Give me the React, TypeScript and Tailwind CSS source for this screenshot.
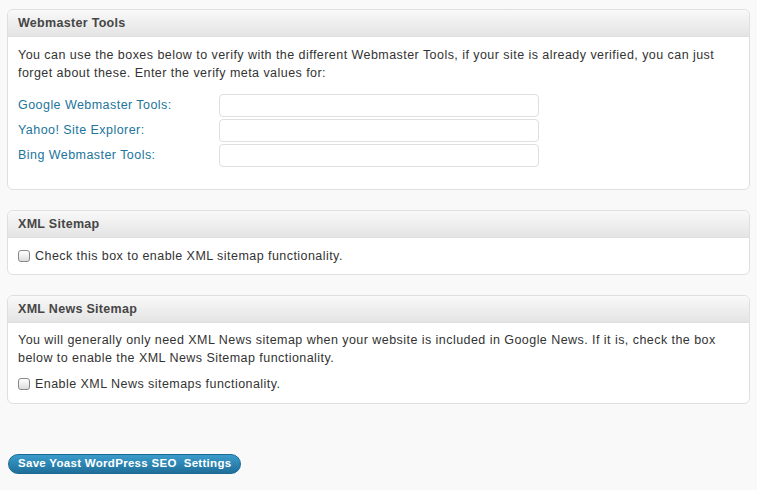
export default function App() {
  const f = { fontFamily: '"Liberation Sans", Arial, sans-serif' };
  const Head = ({ t }: { t: string }) => (
    <div className="h-[27px] flex items-center px-[10px] rounded-t-[6px] border-b border-[#dfdfdf] bg-gradient-to-b from-[#f9f9f9] to-[#e4e4e4] text-[12.5px] font-bold text-[#464646] tracking-[0.3px]">{t}</div>
  );
  const Cb = () => <span className="inline-block w-[12px] h-[12px] border border-[#888] rounded-[3px] bg-gradient-to-b from-white to-[#ddd] mr-[5px] align-[-1px]" />;
  return (
    <div style={f} className="w-[757px] h-[490px] bg-[#f9f9f9] pt-[9px] px-[7px] text-[12.5px] tracking-[0.45px] text-[#333] overflow-hidden">
      <div className="border border-[#dfdfdf] rounded-[6px] bg-white">
        <Head t="Webmaster Tools" />
        <div className="px-[10px] pt-[9px] pb-[21px]">
          <p className="leading-[18px] mb-[11px]">You can use the boxes below to verify with the different Webmaster Tools, if your site is already verified, you can just forget about these. Enter the verify meta values for:</p>
          {["Google Webmaster Tools:", "Yahoo! Site Explorer:", "Bing Webmaster Tools:"].map((l) => (
            <div key={l} className="flex items-center h-[25px]">
              <span className="w-[201px] text-[#21759b]">{l}</span>
              <div className="w-[320px] h-[23px] border border-[#dfdfdf] rounded-[4px] bg-white" />
            </div>
          ))}
        </div>
      </div>
      <div className="border border-[#dfdfdf] rounded-[6px] bg-white mt-[20px]">
        <Head t="XML Sitemap" />
        <div className="px-[10px] h-[36px] flex items-center"><Cb />Check this box to enable XML sitemap functionality.</div>
      </div>
      <div className="border border-[#dfdfdf] rounded-[6px] bg-white mt-[20px]">
        <Head t="XML News Sitemap" />
        <div className="px-[10px] pt-[8px] pb-[9px]">
          <p className="leading-[18px] mb-[8px]">You will generally only need XML News sitemap when your website is included in Google News. If it is, check the box below to enable the XML News Sitemap functionality.</p>
          <div className="flex items-center"><Cb />Enable XML News sitemaps functionality.</div>
        </div>
      </div>
      <button className="mt-[50px] ml-[1px] h-[20px] px-[9px] rounded-full bg-gradient-to-b from-[#3a9ccc] to-[#1f6f99] border border-[#1b6a94] text-white font-bold text-[11.5px] tracking-[0.3px] whitespace-pre">Save Yoast WordPress SEO  Settings</button>
    </div>
  );
}
